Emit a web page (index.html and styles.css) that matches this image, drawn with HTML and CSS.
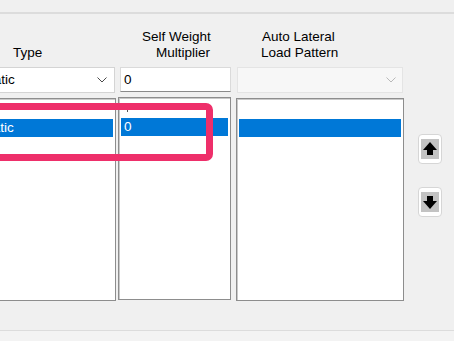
FILE: index.html
```html
<!DOCTYPE html>
<html>
<head>
<meta charset="utf-8">
<link rel="stylesheet" href="styles.css">
</head>
<body>
<div class="top"></div>
<div class="panel">
  <div class="col c1">
    <div class="hdr"><div class="h-type">Type</div></div>
    <div class="combo"><span class="val">Static</span><svg class="chev" width="10" height="6" viewBox="0 0 10 6"><path d="M0.5 0.5 L5 5 L9.5 0.5" fill="none" stroke="#4a4a4a" stroke-width="1"/></svg></div>
    <div class="list">
      <div class="row"></div>
      <div class="row sel">Static</div>
    </div>
  </div>
  <div class="col c2">
    <div class="hdr"><div class="h-sw1">Self Weight</div><div class="h-sw2">Multiplier</div></div>
    <div class="tb">0</div>
    <div class="list">
      <div class="row"><span class="tick"></span></div>
      <div class="row sel">0</div>
    </div>
  </div>
  <div class="col c3">
    <div class="hdr"><div class="h-al1">Auto Lateral</div><div class="h-al2">Load Pattern</div></div>
    <div class="combo dis"><span class="val"></span><svg class="chev" width="10" height="6" viewBox="0 0 10 6"><path d="M0.5 0.5 L5 5 L9.5 0.5" fill="none" stroke="#b9b9b9" stroke-width="1"/></svg></div>
    <div class="list">
      <div class="row"></div>
      <div class="row sel"></div>
    </div>
  </div>
  <div class="col c4">
    <div class="btn"><div class="ico"><svg width="18" height="20" viewBox="0 0 18 20"><polygon points="9,3 16,11 12,11 12,16 6,16 6,11 2,11" fill="#000"/></svg></div></div>
    <div class="btn"><div class="ico"><svg width="18" height="20" viewBox="0 0 18 20"><polygon points="6,4 12,4 12,9 16,9 9,17 2,9 6,9" fill="#000"/></svg></div></div>
  </div>
</div>
<div class="bottom"></div>
<div class="mark"></div>
</body>
</html>
```

FILE: styles.css
```css
* { box-sizing: border-box; }
html, body { margin: 0; padding: 0; }
body {
  width: 454px;
  height: 341px;
  overflow: hidden;
  position: relative;
  background: #f0f0f0;
  font-family: "Liberation Sans", Arial, sans-serif;
  font-size: 13.5px;
  color: #000;
}
.top {
  height: 14px;
  border-bottom: 2px solid #dcdcdc;
}
.panel {
  display: flex;
  margin-left: -26px;
  padding-top: 14px;
}
.col {
  display: flex;
  flex-direction: column;
  flex: none;
}
.c1 { width: 142px; }
.c2 { width: 113px; margin-left: 2px; }
.c3 { width: 168px; margin-left: 5px; }
.c4 {
  margin-left: 14px;
  padding-top: 106px;
  gap: 23px;
}
.hdr {
  height: 33px;
  margin-bottom: 6px;
  display: flex;
  flex-direction: column;
  justify-content: flex-end;
  line-height: 16px;
  white-space: nowrap;
}
.h-type { padding-left: 39px; }
.h-sw1 { padding-left: 24px; }
.h-sw2 { padding-left: 38px; }
.h-al1 { padding-left: 26px; }
.h-al2 { padding-left: 25px; }
.combo {
  height: 26px;
  margin-right: 1px;
  background: #fff;
  border: 1px solid #d4d4d4;
  display: flex;
  align-items: center;
  justify-content: space-between;
  padding: 0 7px 0 6px;
  line-height: 24px;
}
.combo.dis {
  margin-left: 1px;
  background: #f7f7f7;
  border-color: #e4e4e4;
  padding-right: 6px;
}
.chev { display: block; }
.tb {
  height: 25px;
  margin-left: 2px;
  background: #fff;
  border: 1px solid #dadada;
  border-bottom: 1px solid #8a8a8a;
  padding-left: 3px;
  line-height: 23px;
}
.list {
  height: 203px;
  margin-top: 5px;
  background: #fff;
  border: 1px solid #8d8d8d;
  box-shadow: inset 1px 1px 0 #c9c9c9;
  padding: 2px;
}
.row {
  height: 18px;
  line-height: 18px;
  padding-left: 3px;
  white-space: nowrap;
  overflow: hidden;
}
.row.sel {
  background: #0078d7;
  color: #fff;
}
.tick {
  display: inline-block;
  width: 1px;
  height: 2px;
  margin-left: 3px;
  margin-top: 10px;
  vertical-align: top;
  background: #555;
}
.btn {
  width: 24px;
  height: 30px;
  background: #fff;
  border: 1px solid #d6d6d6;
  border-radius: 4px;
  display: flex;
  align-items: center;
  justify-content: center;
}
.ico {
  width: 18px;
  height: 20px;
  background: #c3c3c3;
}
.ico svg { display: block; }
.bottom {
  margin-top: 29px;
  height: 12px;
  border-top: 1px solid #dcdcdc;
  background: #f3f3f3;
}
.mark {
  position: absolute;
  left: -20px;
  top: 103px;
  width: 233px;
  height: 58px;
  border: 7px solid #ee2f6a;
  border-radius: 7px;
}
```
